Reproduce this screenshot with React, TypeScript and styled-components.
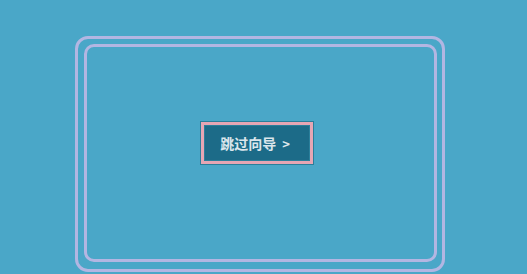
import React from 'react'
import styled, { createGlobalStyle } from 'styled-components'

const Global = createGlobalStyle`
  html, body {
    margin: 0;
    padding: 0;
    background: #4aa7c8;
  }
  body {
    width: 527px;
    height: 274px;
    overflow: hidden;
    font-family: "Noto Sans CJK SC", "Noto Sans", sans-serif;
  }
`

const Page = styled.div`
  padding: 36px 0 0 75px;
`

const OuterFrame = styled.div`
  width: 370px;
  height: 236px;
  box-sizing: border-box;
  border: 3px solid #b3b6e2;
  border-radius: 13px;
  padding: 5px 5px 7px 6px;
`

const InnerFrame = styled.div`
  height: 100%;
  box-sizing: border-box;
  border: 3px solid #b3b6e2;
  border-radius: 10px;
  display: flex;
  align-items: flex-start;
  padding: 74px 0 0 113px;
`

const SkipButton = styled.button`
  width: 114px;
  height: 44px;
  box-sizing: border-box;
  border: 1px solid #2a7f9b;
  background: #1c6b88;
  box-shadow: inset 0 0 0 3px #e6a6b4, inset 0 0 0 4px #2a7f9b;
  color: #dbe6ec;
  font-family: "Noto Sans CJK SC", "Noto Sans", sans-serif;
  font-size: 14px;
  font-weight: 700;
  display: flex;
  align-items: center;
  justify-content: center;
  gap: 6px;
  padding: 0 4px 0 0;
  cursor: pointer;
`

const Arrow = styled.span`
  font-size: 13px;
`

export default function App() {
  return (
    <>
      <Global />
      <Page>
        <OuterFrame>
          <InnerFrame>
            <SkipButton type="button">
              跳过向导<Arrow>&gt;</Arrow>
            </SkipButton>
          </InnerFrame>
        </OuterFrame>
      </Page>
    </>
  )
}
